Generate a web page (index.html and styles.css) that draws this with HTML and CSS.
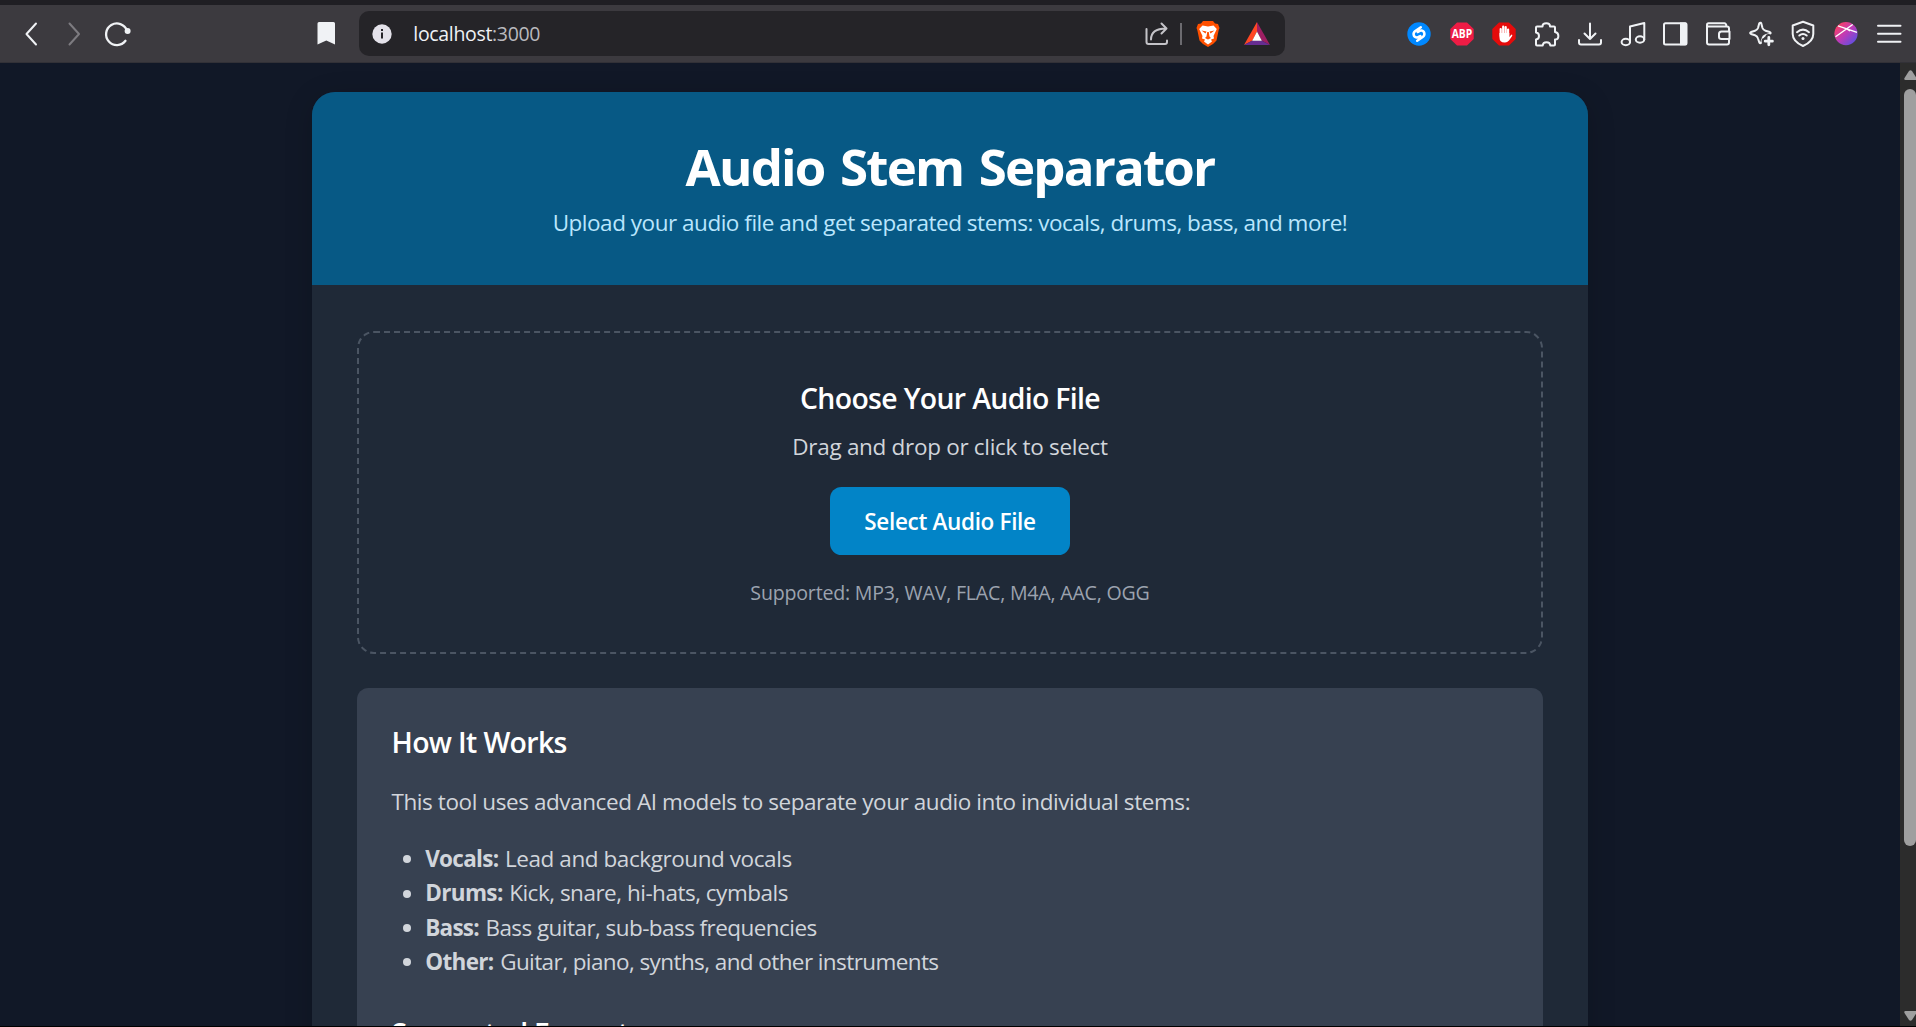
FILE: index.html
```html
<!DOCTYPE html>
<html lang="en">
<head>
<meta charset="utf-8">
<title>Audio Stem Separator</title>
<link rel="stylesheet" href="styles.css">
</head>
<body>
<div class="window">
  <div class="toolbar">
    <div class="nav">
      <svg class="icon" viewBox="0 0 28 28"><path d="M19 3.5 9.5 14 19 24.5"/></svg>
      <svg class="icon dim" viewBox="0 0 28 28"><path d="M9.5 3.5 19 14 9.5 24.5"/></svg>
      <svg class="icon reload" viewBox="0 0 28 28"><path d="M23 10.5A10.8 10.8 0 1 0 21.5 20.8"/><circle class="solid" cx="23.6" cy="11" r="3"/></svg>
    </div>
    <svg class="icon bookmark" viewBox="0 0 28 28"><path class="solid" d="M5.500 3.500Q5.500 2 7 2H21.500Q23 2 23 3.500V24.500L14.300 20.500 5.500 24.500Z"/></svg>
    <div class="address">
      <svg class="icon info" viewBox="0 0 28 28"><circle class="info-disc" cx="14" cy="14" r="9.700"/><path class="info-mark" d="M14 12.500V18.500M14 9V11"/></svg>
      <div class="url"><span class="host">localhost</span><span class="port">:3000</span></div>
      <svg class="icon share" viewBox="0 0 28 28"><path d="M3.500 9V22Q3.500 24 5.500 24H22Q24 24 24 22V20.500M8 19.500C8 12.500 13 8.500 23 8.500M18.500 3.500 23.500 8.500 18.500 13.500"/></svg>
      <div class="divider"></div>
      <svg class="icon brave" viewBox="0 0 28 28"><path fill="#ff5000" d="M9 1H19L21 3.500 24 4 25.500 8 24.700 10 22.500 20.500 19 24 14 27 9 24 5.500 20.500 3.300 10 2.500 8 4 4 7 3.500Z"/><path fill="#fff" d="M8.500 5.500 14 6.500 19.500 5.500 22.800 9 19.500 16 20 18.500 17 19.500 18 21.500 14 24.500 10 21.500 11 19.500 8 18.500 8.500 16 5.200 9Z"/><path fill="#ff5000" d="M7.500 10.500 12.500 11.500 11.500 13.500ZM20.500 10.500 15.500 11.500 16.500 13.500ZM13.200 12H14.800L15.500 16.500 17 18 14 19.500 11 18 12.500 16.500Z"/></svg>
      <svg class="icon rewards" viewBox="0 0 28 28"><path fill="#ff4724" d="M14 2 1 25 9.500 20.500 14 11.500Z"/><path fill="#9e1f63" d="M14 2 27 25 18.500 20.500 14 11.500Z"/><path fill="#662d91" d="M1 25H27L18.500 20.500H9.500Z"/><path fill="#fff" d="M14 11.500 18.800 20.800H9.200Z"/></svg>
    </div>
    <div class="extensions">
      <svg class="icon" viewBox="0 0 28 28"><circle cx="14" cy="14" r="11.700" fill="#0088ff" stroke="none"/><path class="shazam" d="M15.800 7.300 10.300 11C7.500 13 8.300 17 11.500 17.500 13 17.700 14 16.800 15.300 16M12.200 20.700 17.700 17C20.500 15 19.700 11 16.500 10.500 15 10.300 14 11.200 12.700 12"/></svg>
      <svg class="icon" viewBox="0 0 28 28"><path fill="#ee1c45" stroke="none" d="M9 2.500H19L25.700 9V19L19 25.500H9L2.300 19V9Z"/><text class="abp" x="14" y="18.200" textLength="20.500" lengthAdjust="spacingAndGlyphs">ABP</text></svg>
      <svg class="icon" viewBox="0 0 28 28"><path fill="#e50b0b" stroke="none" d="M9 2.500H19L25.700 9V19L19 25.500H9L2.300 19V9Z"/><path class="hand" d="M10.700 16V9M13.200 14V6.700M15.700 14V7.200M18.100 16V9.500"/><path fill="#fff" stroke="none" d="M9.500 13H19.300V17L21.500 14.500Q23 14.700 22 16.300L19 20.500Q17 22.800 14.500 22.500 9.500 22.500 9.500 17.500Z"/></svg>
      <svg class="icon" viewBox="0 0 28 28"><path d="M4 6.500H9.500C9.500 2.300 17 2.300 17 6.500H21Q22 6.500 22 7.500V12C26.500 12.500 26.500 19.500 22 19.500V24.500Q22 25.500 21 25.500H17.300C17 21 10 21 9.700 25.500H4Q3 25.500 3 24.500V19.500C7 19 7 13 3 12.500V7.500Q3 6.500 4 6.500Z"/></svg>
      <svg class="icon" viewBox="0 0 28 28"><path d="M14 3.500V19M8.500 13.500 14 19 19.500 13.500M3 20V22.500Q3 24.500 5 24.500H23Q25 24.500 25 22.500V20"/></svg>
      <svg class="icon" viewBox="0 0 28 28"><path d="M11 22V6.500L25.300 3V19.500"/><ellipse cx="6.800" cy="22" rx="4.200" ry="3.200"/><ellipse cx="21" cy="19.500" rx="4.200" ry="3.200"/></svg>
      <svg class="icon" viewBox="0 0 28 28"><rect x="3" y="3.200" width="22.500" height="21.300" rx="1.500"/><path class="solid" d="M19 2.500H24.500Q26 2.500 26 4V24Q26 25.300 24.500 25.300H19Z"/></svg>
      <svg class="icon" viewBox="0 0 28 28"><path d="M25 11.500V8.500Q25 6.500 23 6.500H4.500Q3 6.500 3 5 3 3.300 4.500 3.300H20.500Q22 3.300 22.500 6M3 5V22.500Q3 24.500 5 24.500H23Q25 24.500 25 22.500V19.500M25.500 11.500H17.500Q15 11.500 15 14V17Q15 19 17.500 19H25.500Z"/></svg>
      <svg class="icon" viewBox="0 0 28 28"><path d="M12.800 2.800Q13.800 2.300 14.300 3.500L15.500 8Q16.200 10 18.500 10.700L22.800 12Q24.500 13 22.800 14L18.500 15.300Q16 16.200 15.500 18.500L14.200 22.500Q13.300 24.200 12.300 22.500L11 18.500Q10.300 16 8 15.300L4 14Q2.300 13 4 12L8 10.700Q10.300 10 11 8L12.200 3.500Z"/><path class="cut" d="M21.500 17V25M17.500 21H25.500"/><path class="plus" d="M21.800 17.500V24.800M18.200 21.200H25.400"/></svg>
      <svg class="icon" viewBox="0 0 28 28"><path d="M14 1.800 24.300 5.500V14Q24.300 21.500 14 26 3.700 21.500 3.700 14V5.500ZM8 12.200Q14 7 20 12.200M10.300 15.500Q14 12.500 17.700 15.500"/><circle class="solid" cx="14" cy="18.600" r="1.500"/></svg>
      <svg class="icon" viewBox="0 0 28 28"><defs><linearGradient id="orb" x1="0" y1="0" x2="1" y2="1"><stop offset="0.100" stop-color="#ff4060"/><stop offset="0.500" stop-color="#bd3bb8"/><stop offset="0.950" stop-color="#4f52e8"/></linearGradient></defs><circle cx="14" cy="13.600" r="11.600" fill="url(#orb)" stroke="none"/><path class="orb-line" d="M3.500 16.700 20.700 4.500M6 5.800 25 12.400M14.500 8.700 18 11"/></svg>
      <svg class="icon" viewBox="0 0 28 28"><path d="M3 5.800H25.500M3 13.800H25.500M3 21.800H25.500"/></svg>
    </div>
  </div>

  <div class="viewport">
    <main class="page">
      <section class="container">
        <header class="hero">
          <h1>Audio Stem Separator</h1>
          <p>Upload your audio file and get separated stems: vocals, drums, bass, and more!</p>
        </header>
        <div class="content">
          <div class="dropzone">
            <h2>Choose Your Audio File</h2>
            <p class="hint">Drag and drop or click to select</p>
            <button class="select" type="button">Select Audio File</button>
            <p class="formats">Supported: MP3, WAV, FLAC, M4A, AAC, OGG</p>
          </div>
          <div class="card">
            <h3 class="how">How It Works</h3>
            <p class="intro">This tool uses advanced AI models to separate your audio into individual stems:</p>
            <ul>
              <li class="vocals"><strong>Vocals:</strong> <span>Lead and background vocals</span></li>
              <li class="drums"><strong>Drums:</strong> <span>Kick, snare, hi-hats, cymbals</span></li>
              <li class="bass"><strong>Bass:</strong> <span>Bass guitar, sub-bass frequencies</span></li>
              <li class="other"><strong>Other:</strong> <span>Guitar, piano, synths, and other instruments</span></li>
            </ul>
            <h3 class="supported">Supported Formats</h3>
          </div>
        </div>
      </section>
    </main>
    <div class="scrollbar">
      <svg class="arrow" viewBox="0 0 12 10"><path d="M5 1Q6.500-.5 8 1L12.500 8Q13 10 11.500 10H1.500Q-.3 10 .5 8Z"/></svg>
      <div class="track"><div class="thumb"></div></div>
      <svg class="arrow" viewBox="0 0 12 10"><path d="M5 9Q6.500 10.500 8 9L12.500 2Q13 0 11.500 0H1.500Q-.3 0 .5 2Z"/></svg>
    </div>
  </div>
</div>
</body>
</html>
```
FILE: styles.css
```css
* { box-sizing: border-box; }

body {
  margin: 0;
  font-family: "Open Sans", "Noto Sans", sans-serif;
  background: #111827;
  overflow: hidden;
}

h1, h2, h3, p, ul { margin: 0; padding: 0; }

.window {
  display: flex;
  flex-direction: column;
  height: 1027px;
  border-bottom: 1px solid #000;
}

/* Browser toolbar */
.toolbar {
  flex: none;
  display: flex;
  align-items: center;
  height: 63px;
  border-top: 5px solid #1f1e23;
  border-bottom: 1px solid #323137;
  background: #3c3a3f;
}

.icon {
  flex: none;
  display: block;
  width: 28px;
  height: 28px;
  fill: none;
  stroke: #f0f2f5;
  stroke-width: 2;
  stroke-linecap: round;
  stroke-linejoin: round;
}
.dim { stroke: #7d7b80; }
.solid { fill: #f0f2f5; stroke: none; }

.nav { display: flex; gap: 15px; padding-left: 17px; width: 312px; }
.reload { margin-left: 1px; stroke-width: 2.300; }

.bookmark { margin-right: 19px; }

.address {
  display: flex;
  align-items: center;
  width: 926px;
  height: 45px;
  border-radius: 10px;
  background: #252428;
}
.info { margin-left: 9px; }
.info-disc { fill: #e4e2ea; stroke: none; }
.info-mark { stroke: #252428; stroke-width: 2; stroke-linecap: butt; }
.url {
  flex: 1;
  padding-left: 17.300px;
  font-size: 19.500px;
  line-height: 28px;
  letter-spacing: -0.330px;
}
.host { color: #f0f2f5; }
.port { color: #b9b9be; }
.share { stroke: #c4c3c8; margin-right: 9px; }
.divider { width: 2px; height: 22px; background: #6c6b70; }
.brave { stroke: none; margin-left: 12px; }
.rewards { stroke: none; margin: 0 14px 0 21px; }

.extensions { display: flex; gap: 14.730px; margin-left: 120px; }
.shazam { stroke: #fff; stroke-width: 2.500; }
.abp {
  fill: #fff;
  stroke: none;
  font: 700 12px "Open Sans", sans-serif;
  text-anchor: middle;
}
.hand { stroke: #fff; stroke-width: 2.200; }
.cut { stroke: #3c3a3f; stroke-width: 6; }
.plus { stroke-width: 2.800; }
.orb-line { stroke: #fff; stroke-width: 1.400; stroke-linecap: butt; }

/* Page area */
.viewport { flex: 1; display: flex; min-height: 0; }

.page {
  flex: 1;
  display: flex;
  justify-content: center;
  padding-top: 29px;
  overflow: hidden;
}

.container {
  width: 1276px;
  height: 1400px;
  flex: none;
  border-radius: 23px;
  background: #1f2937;
  box-shadow: 0 6px 28px rgba(0, 0, 0, 0.180);
  overflow: hidden;
}

.hero {
  height: 193px;
  padding-top: 44px;
  background: #075985;
  text-align: center;
}
.hero h1 {
  color: #fff;
  font-size: 51px;
  font-weight: 700;
  line-height: 60px;
  letter-spacing: -1.820px;
  word-spacing: 4px;
}
.hero p {
  margin-top: 10px;
  color: #bae6fd;
  font-size: 22.500px;
  line-height: 34px;
  letter-spacing: -0.480px;
}

.content { padding: 46px 45px; }

.dropzone {
  display: flex;
  flex-direction: column;
  align-items: center;
  height: 323px;
  padding-top: 47px;
  border: 2px dashed #4b5563;
  border-radius: 17px;
}
.dropzone h2 {
  color: #fff;
  font-size: 28.400px;
  font-weight: 600;
  line-height: 36px;
  letter-spacing: -0.660px;
}
.hint {
  margin-top: 14px;
  color: #d1d5db;
  font-size: 22.500px;
  line-height: 34px;
  letter-spacing: -0.307px;
}
.select {
  width: 240px;
  height: 68px;
  margin-top: 23px;
  padding: 0;
  border: 0;
  border-radius: 11.500px;
  background: #0284c7;
  color: #fff;
  font: 600 22.500px "Open Sans", sans-serif;
  letter-spacing: -0.330px;
}
.formats {
  margin-top: 23px;
  color: #9ca3af;
  font-size: 19.600px;
  line-height: 30px;
  letter-spacing: -0.205px;
}

.card {
  height: 600px;
  margin-top: 34px;
  padding: 36px 34.500px;
  border-radius: 11.500px;
  background: #374151;
  color: #d1d5db;
  font-size: 22.500px;
}
.card h3 {
  color: #fff;
  font-size: 28.400px;
  font-weight: 600;
  line-height: 36px;
}
.how { letter-spacing: -0.650px; }
.intro { margin-top: 25px; line-height: 34px; letter-spacing: -0.424px; }
.card ul { margin-top: 23px; padding-left: 11.500px; list-style: none; }
.card li { display: flex; align-items: center; line-height: 34.400px; }
.card li::before {
  content: "";
  width: 8px;
  height: 8px;
  margin-right: 14.200px;
  border-radius: 50%;
  background: #d1d5db;
}
.card li span { margin-left: 6.500px; }
.vocals strong { letter-spacing: -0.700px; }
.vocals span { letter-spacing: -0.430px; }
.drums strong { letter-spacing: -0.650px; }
.drums span { letter-spacing: -0.500px; }
.bass strong { letter-spacing: -0.750px; }
.bass span { letter-spacing: -0.560px; }
.other strong { letter-spacing: -0.660px; }
.other span { letter-spacing: -0.590px; }
.supported { margin-top: 35px; letter-spacing: -0.880px; }

/* Scrollbar */
.scrollbar {
  display: flex;
  flex-direction: column;
  width: 16px;
  padding: 7px 0 5px 4px;
  background: #2c2c2c;
}
.arrow { flex: none; width: 12px; height: 10px; fill: #9f9f9f; }
.track { flex: 1; padding-top: 9px; }
.thumb { height: 757px; border-radius: 6px; background: #9f9f9f; }
```
